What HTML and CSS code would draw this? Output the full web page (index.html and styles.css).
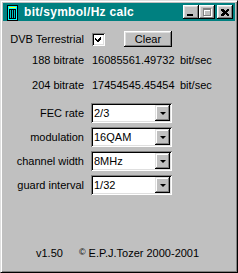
FILE: index.html
```html
<!DOCTYPE html>
<html lang="en">
<head>
    <meta charset="UTF-8">
    <title>bit/symbol/Hz calc</title>
    <link rel="stylesheet" href="styles.css">
</head>
<body>
<div class="window">
    <div class="titlebar">
        <svg class="app-icon" width="11" height="16" viewBox="0 0 11 16" shape-rendering="crispEdges">
            <rect x="0" y="0" width="11" height="16" fill="#000"/>
            <rect x="1" y="1" width="9" height="14" fill="#00ffff"/>
            <rect x="2" y="2" width="7" height="1" fill="#ffff00"/>
            <rect x="2" y="4" width="7" height="10" fill="#000"/>
            <rect x="3" y="5" width="1" height="8" fill="#00c0c0"/>
            <rect x="5" y="5" width="1" height="8" fill="#00c0c0"/>
            <rect x="7" y="5" width="1" height="8" fill="#00c0c0"/>
        </svg>
        <span class="title">bit/symbol/Hz calc</span>
        <div class="title-buttons">
            <span class="tbtn tbtn-min"><i></i></span>
            <span class="tbtn tbtn-max">
                <svg width="9" height="9" viewBox="0 0 9 9" shape-rendering="crispEdges">
                    <path d="M1 1h8v8h-8z M2 3v5h6v-5z" fill="#fff" fill-rule="evenodd"/>
                    <path d="M0 0h8v8h-8z M1 2v5h6v-5z" fill="#808080" fill-rule="evenodd"/>
                </svg>
            </span>
            <span class="tbtn tbtn-close">
                <svg width="8" height="7" viewBox="0 0 8 7" shape-rendering="crispEdges">
                    <path d="M0 0h2l2 2 2-2h2v1l-2 2.5 2 2.5v1h-2l-2-2-2 2h-2v-1l2-2.5-2-2.5z" fill="#000"/>
                </svg>
            </span>
        </div>
    </div>

    <div class="client">
        <div class="row row-top">
            <span class="label">DVB Terrestrial</span>
            <span class="checkbox">
                <svg width="7" height="7" viewBox="0 0 7 7" shape-rendering="crispEdges">
                    <path d="M6 0v3l-3 3h-1l-2-2v-2l2 2h0l4-4z" fill="#000"/>
                </svg>
            </span>
            <span class="btn">Clear</span>
        </div>

        <div class="row row-result">
            <span class="label">188 bitrate</span>
            <span class="value">16085561.49732</span>
            <span class="unit">bit/sec</span>
        </div>
        <div class="row row-result second">
            <span class="label">204 bitrate</span>
            <span class="value">17454545.45454</span>
            <span class="unit">bit/sec</span>
        </div>

        <div class="fields">
            <div class="row row-field">
                <span class="label">FEC rate</span>
                <div class="combo"><span class="combo-text">2/3</span><span class="combo-btn"><i></i></span></div>
            </div>
            <div class="row row-field">
                <span class="label">modulation</span>
                <div class="combo"><span class="combo-text">16QAM</span><span class="combo-btn"><i></i></span></div>
            </div>
            <div class="row row-field">
                <span class="label">channel width</span>
                <div class="combo"><span class="combo-text">8MHz</span><span class="combo-btn"><i></i></span></div>
            </div>
            <div class="row row-field">
                <span class="label">guard interval</span>
                <div class="combo"><span class="combo-text">1/32</span><span class="combo-btn"><i></i></span></div>
            </div>
        </div>

        <div class="footer">
            <span class="version">v1.50</span>
            <span class="copy"><span class="copy-sign">©</span> E.P.J.Tozer 2000-2001</span>
        </div>
    </div>
</div>
</body>
</html>
```

FILE: styles.css
```css
body {
    margin: 0;
    background-color: #c0c0c0;
    font-family: "Liberation Sans", Arial, sans-serif;
    font-size: 11px;
    color: #000;
}

.window {
    width: 238px;
    height: 273px;
    box-sizing: border-box;
    padding: 2px;
    border: 1px solid;
    border-color: #dfdfdf #000 #000 #dfdfdf;
    box-shadow: inset 1px 1px #fff, inset -1px -1px #808080;
    background-color: #c0c0c0;
    display: flex;
    flex-direction: column;
}

.titlebar {
    height: 18px;
    background-color: #008080;
    display: flex;
    align-items: center;
    padding: 0 2px 0 4px;
}

.app-icon {
    margin-top: 1px;
    flex: none;
}

.title {
    margin-left: 6px;
    color: #fff;
    font-weight: bold;
    font-size: 12px;
    letter-spacing: 0.3px;
}

.title-buttons {
    margin-left: auto;
    display: flex;
}

.tbtn {
    width: 16px;
    height: 14px;
    box-sizing: border-box;
    background-color: #c0c0c0;
    box-shadow: inset -1px -1px #000, inset 1px 1px #fff, inset -2px -2px #808080, inset 2px 2px #dfdfdf;
    display: flex;
    align-items: center;
    justify-content: center;
}

.tbtn-min {
    align-items: flex-end;
    justify-content: flex-start;
    padding: 0 0 3px 4px;
}

.tbtn-min i {
    display: block;
    width: 6px;
    height: 2px;
    background-color: #000;
}

.tbtn-close {
    margin-left: 2px;
}

.client {
    flex: 1;
    display: flex;
    flex-direction: column;
}

.row {
    display: flex;
    align-items: center;
}

.label {
    width: 81px;
    text-align: right;
    white-space: nowrap;
    flex: none;
}

.row-top {
    height: 18px;
    margin-top: 9px;
}

.checkbox {
    width: 13px;
    height: 13px;
    box-sizing: border-box;
    margin-left: 8px;
    background-color: #fff;
    box-shadow: inset 1px 1px #808080, inset -1px -1px #fff, inset 2px 2px #000, inset -2px -2px #dfdfdf;
    display: flex;
    align-items: center;
    justify-content: center;
}

.btn {
    width: 48px;
    height: 16px;
    box-sizing: border-box;
    margin-left: 19px;
    background-color: #c0c0c0;
    box-shadow: inset -1px -1px #000, inset 1px 1px #fff, inset -2px -2px #808080, inset 2px 2px #dfdfdf;
    display: flex;
    align-items: center;
    justify-content: center;
    font-size: 11px;
}

.row-result {
    height: 18px;
    margin-top: 3px;
}

.row-result.second {
    margin-top: 7px;
}

.value {
    margin-left: 8px;
    width: 88px;
}

.fields {
    margin-top: 9px;
    display: flex;
    flex-direction: column;
    gap: 4px;
}

.row-field {
    height: 20px;
}

.combo {
    margin-left: 7px;
    width: 81px;
    height: 20px;
    box-sizing: border-box;
    padding: 2px;
    background-color: #fff;
    box-shadow: inset 1px 1px #808080, inset -1px -1px #fff, inset 2px 2px #000, inset -2px -2px #dfdfdf;
    display: flex;
}

.combo-text {
    flex: 1;
    padding-left: 1px;
    font-size: 11px;
    line-height: 16px;
}

.combo-btn {
    width: 15px;
    height: 16px;
    box-sizing: border-box;
    background-color: #c0c0c0;
    box-shadow: inset -1px -1px #000, inset 1px 1px #dfdfdf, inset -2px -2px #808080, inset 2px 2px #fff;
    display: flex;
    align-items: center;
    justify-content: center;
}

.combo-btn i {
    width: 0;
    height: 0;
    border-left: 3px solid transparent;
    border-right: 3px solid transparent;
    border-top: 3px solid #000;
}

.footer {
    margin-top: 49px;
    height: 18px;
    display: flex;
    align-items: center;
    padding-left: 33px;
}

.copy {
    margin-left: 16px;
}

.copy-sign {
    font-size: 9px;
    vertical-align: 2px;
}
```
